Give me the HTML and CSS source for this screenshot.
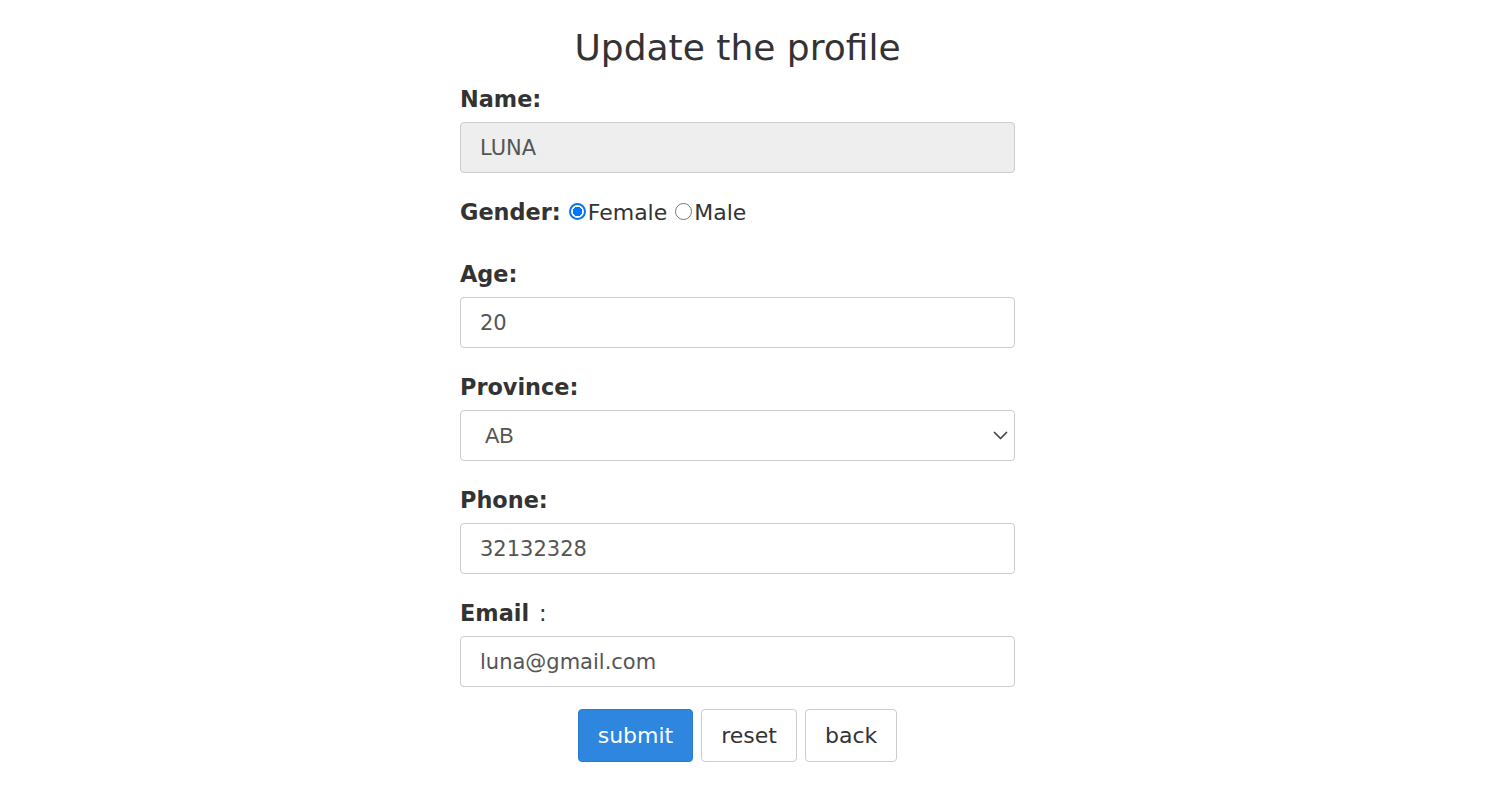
FILE: index.html
```html
<!DOCTYPE html>
<html>
<head>
<meta charset="utf-8">
<link rel="stylesheet" href="styles.css">
</head>
<body>
<div class="container">
  <h1 class="title">Update the profile</h1>
  <form class="form">
    <div class="group">
      <label class="label">Name:</label>
      <input class="field field-readonly" type="text" value="LUNA" readonly>
    </div>
    <div class="group group-gender">
      <span class="label-inline">Gender:</span>
      <label class="radio"><span class="dot dot-on"></span>Female</label>
      <label class="radio"><span class="dot"></span>Male</label>
    </div>
    <div class="group">
      <label class="label">Age:</label>
      <input class="field" type="text" value="20">
    </div>
    <div class="group">
      <label class="label">Province:</label>
      <div class="select-wrap">
        <select class="field select"><option>AB</option></select>
        <svg class="chevron" width="15" height="9" viewBox="0 0 15 9"><path d="M1.5 1.5 L7.5 7.5 L13.5 1.5" fill="none" stroke="#444" stroke-width="1.7" stroke-linecap="round" stroke-linejoin="round"/></svg>
      </div>
    </div>
    <div class="group">
      <label class="label">Phone:</label>
      <input class="field" type="text" value="32132328">
    </div>
    <div class="group group-last">
      <label class="label">Email <span class="colon">:</span></label>
      <input class="field" type="text" value="luna@gmail.com">
    </div>
    <div class="buttons">
      <button type="button" class="btn btn-primary">submit</button>
      <button type="button" class="btn">reset</button>
      <button type="button" class="btn">back</button>
    </div>
  </form>
</div>
</body>
</html>
```

FILE: styles.css
```css
html, body {
  margin: 0;
  padding: 0;
  background: #fff;
}
body {
  font-family: "DejaVu Sans", Verdana, sans-serif;
  color: #333;
}
.container {
  width: 555px;
  margin: 0 auto 0 460px;
  padding-top: 27px;
}
.title {
  margin: 0 0 15px;
  font-size: 36px;
  line-height: 42px;
  font-weight: normal;
  text-align: center;
  color: #333;
}
.group {
  margin-bottom: 24px;
}
.group-last {
  margin-bottom: 22px;
}
.label {
  display: block;
  font-size: 22.4px;
  line-height: 30px;
  font-weight: bold;
  margin-bottom: 8px;
}
.colon {
  font-weight: normal;
  margin-left: 2px;
}
.group-gender {
  display: flex;
  align-items: center;
  height: 30px;
  margin-bottom: 32px;
  font-size: 22px;
}
.label-inline {
  font-weight: bold;
  font-size: 22.4px;
  margin-right: 8px;
}
.radio {
  display: flex;
  align-items: center;
  margin-right: 8px;
}
.dot {
  width: 17px;
  height: 17px;
  box-sizing: border-box;
  border: 1px solid #767676;
  border-radius: 50%;
  margin-right: 2px;
  position: relative;
  top: -1px;
}
.dot-on {
  border: 2px solid #0075ff;
  background: radial-gradient(circle, #0075ff 0 4.6px, #fff 5px);
}
.field {
  display: block;
  width: 100%;
  box-sizing: border-box;
  height: 51px;
  padding: 0 19px;
  border: 1px solid #ccc;
  border-radius: 4px;
  font-family: "DejaVu Sans", Verdana, sans-serif;
  font-size: 21px;
  color: #555;
  background: #fff;
  outline: none;
}
.field-readonly {
  background: #eee;
}
.select-wrap {
  position: relative;
}
.select {
  appearance: none;
  -webkit-appearance: none;
  font-family: "Liberation Sans", Arial, sans-serif;
  font-size: 21.5px;
  padding-left: 24px;
}
.chevron {
  position: absolute;
  right: 7px;
  top: 21px;
}
.buttons {
  display: flex;
  justify-content: center;
  gap: 8px;
}
.btn {
  height: 53px;
  padding: 0 19px;
  border: 1px solid #ccc;
  border-radius: 4px;
  background: #fff;
  color: #333;
  font-family: "DejaVu Sans", Verdana, sans-serif;
  font-size: 22px;
}
.btn-primary {
  background: #2e86de;
  border-color: #2a7bcc;
  color: #fff;
}
```
